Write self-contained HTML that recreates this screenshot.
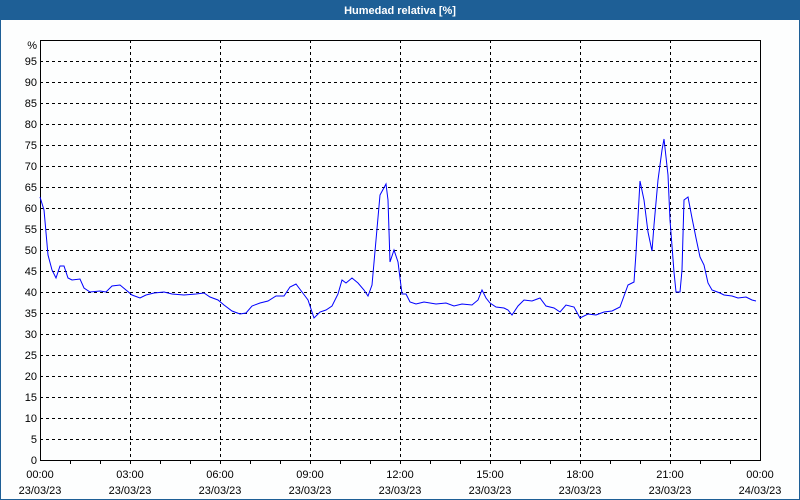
<!DOCTYPE html>
<html><head><meta charset="utf-8"><style>
html,body{margin:0;padding:0;width:800px;height:500px;overflow:hidden;background:#fdfefe}
</style></head><body>
<svg width="800" height="500" xmlns="http://www.w3.org/2000/svg" font-family="Liberation Sans, sans-serif" font-size="11">
<rect x="0" y="0" width="800" height="500" fill="#1e5f96"/>
<rect x="1" y="20" width="798" height="479" fill="#fdfefe"/>
<text x="400" y="14" fill="#fff" font-weight="bold" text-anchor="middle" font-size="11">Humedad relativa [%]</text>
<g stroke="#000" stroke-dasharray="3,3" shape-rendering="crispEdges" stroke-width="1">
<line x1="40" y1="61.5" x2="760" y2="61.5"/><line x1="40" y1="82.5" x2="760" y2="82.5"/><line x1="40" y1="103.5" x2="760" y2="103.5"/><line x1="40" y1="124.5" x2="760" y2="124.5"/><line x1="40" y1="145.5" x2="760" y2="145.5"/><line x1="40" y1="166.5" x2="760" y2="166.5"/><line x1="40" y1="187.5" x2="760" y2="187.5"/><line x1="40" y1="208.5" x2="760" y2="208.5"/><line x1="40" y1="229.5" x2="760" y2="229.5"/><line x1="40" y1="250.5" x2="760" y2="250.5"/><line x1="40" y1="271.5" x2="760" y2="271.5"/><line x1="40" y1="292.5" x2="760" y2="292.5"/><line x1="40" y1="313.5" x2="760" y2="313.5"/><line x1="40" y1="334.5" x2="760" y2="334.5"/><line x1="40" y1="355.5" x2="760" y2="355.5"/><line x1="40" y1="376.5" x2="760" y2="376.5"/><line x1="40" y1="397.5" x2="760" y2="397.5"/><line x1="40" y1="418.5" x2="760" y2="418.5"/><line x1="40" y1="439.5" x2="760" y2="439.5"/>
<line x1="130.5" y1="40" x2="130.5" y2="460"/><line x1="220.5" y1="40" x2="220.5" y2="460"/><line x1="310.5" y1="40" x2="310.5" y2="460"/><line x1="400.5" y1="40" x2="400.5" y2="460"/><line x1="490.5" y1="40" x2="490.5" y2="460"/><line x1="580.5" y1="40" x2="580.5" y2="460"/><line x1="670.5" y1="40" x2="670.5" y2="460"/>
</g>
<rect x="40.5" y="40.5" width="720" height="420" fill="none" stroke="#000" shape-rendering="crispEdges"/>
<g stroke="#000" shape-rendering="crispEdges">
<line x1="70.5" y1="460" x2="70.5" y2="464"/><line x1="100.5" y1="460" x2="100.5" y2="464"/><line x1="130.5" y1="460" x2="130.5" y2="464"/><line x1="160.5" y1="460" x2="160.5" y2="464"/><line x1="190.5" y1="460" x2="190.5" y2="464"/><line x1="220.5" y1="460" x2="220.5" y2="464"/><line x1="250.5" y1="460" x2="250.5" y2="464"/><line x1="280.5" y1="460" x2="280.5" y2="464"/><line x1="310.5" y1="460" x2="310.5" y2="464"/><line x1="340.5" y1="460" x2="340.5" y2="464"/><line x1="370.5" y1="460" x2="370.5" y2="464"/><line x1="400.5" y1="460" x2="400.5" y2="464"/><line x1="430.5" y1="460" x2="430.5" y2="464"/><line x1="460.5" y1="460" x2="460.5" y2="464"/><line x1="490.5" y1="460" x2="490.5" y2="464"/><line x1="520.5" y1="460" x2="520.5" y2="464"/><line x1="550.5" y1="460" x2="550.5" y2="464"/><line x1="580.5" y1="460" x2="580.5" y2="464"/><line x1="610.5" y1="460" x2="610.5" y2="464"/><line x1="640.5" y1="460" x2="640.5" y2="464"/><line x1="670.5" y1="460" x2="670.5" y2="464"/><line x1="700.5" y1="460" x2="700.5" y2="464"/><line x1="730.5" y1="460" x2="730.5" y2="464"/>
</g>
<g text-anchor="end" fill="#000">
<text x="37" y="49">%</text>
<text x="37" y="65">95</text><text x="37" y="86">90</text><text x="37" y="107">85</text><text x="37" y="128">80</text><text x="37" y="149">75</text><text x="37" y="170">70</text><text x="37" y="191">65</text><text x="37" y="212">60</text><text x="37" y="233">55</text><text x="37" y="254">50</text><text x="37" y="275">45</text><text x="37" y="296">40</text><text x="37" y="317">35</text><text x="37" y="338">30</text><text x="37" y="359">25</text><text x="37" y="380">20</text><text x="37" y="401">15</text><text x="37" y="422">10</text><text x="37" y="443">5</text><text x="37" y="464">0</text>
</g>
<g text-anchor="middle" fill="#000">
<text x="40" y="478">00:00</text><text x="40" y="494">23/03/23</text>
<text x="130" y="478">03:00</text><text x="130" y="494">23/03/23</text>
<text x="220" y="478">06:00</text><text x="220" y="494">23/03/23</text>
<text x="310" y="478">09:00</text><text x="310" y="494">23/03/23</text>
<text x="400" y="478">12:00</text><text x="400" y="494">23/03/23</text>
<text x="490" y="478">15:00</text><text x="490" y="494">23/03/23</text>
<text x="580" y="478">18:00</text><text x="580" y="494">23/03/23</text>
<text x="670" y="478">21:00</text><text x="670" y="494">23/03/23</text>
<text x="760" y="478">00:00</text><text x="760" y="494">24/03/23</text>
</g>
<polyline fill="none" stroke="#0000ff" stroke-width="1" points="40,197 44,210 48,255 52,270 56,278 60,266 64,266 68,278 72,280 80,279 84,288 90,292 100,291 106,292 112,286 120,285 126,290 132,295 140,298 146,295 154,293 164,292 172,294 184,295 196,294 204,293 210,297 218,300 224,305 232,311 240,314 246,313 252,306 260,303 268,301 276,296 284,296 290,287 296,284 302,292 308,300 314,318 320,312 326,310 332,306 338,294 342,280 346,283 352,278 358,283 364,290 368,296 372,285 376,240 380,195 386,184 388,200 390,262 394,250 398,262 402,294 406,294 410,302 416,304 424,302 436,304 446,303 454,306 462,304 472,305 478,300 482,290 486,298 490,303 496,307 504,308 508,310 512,315 518,306 524,300 532,301 540,298 546,306 554,308 560,312 566,305 574,307 580,318 588,314 596,315 604,312 612,311 620,307 624,296 628,285 634,282 636,253 640,181 644,200 648,232 652,251 654,225 658,180 662,150 664,139 668,175 670,220 674,272 676,292 680,292 682,270 684,200 688,197 692,218 696,238 700,257 704,265 708,283 712,290 720,293 724,295 732,296 738,298 746,297 752,300 756,301"/>
</svg>
</body></html>
